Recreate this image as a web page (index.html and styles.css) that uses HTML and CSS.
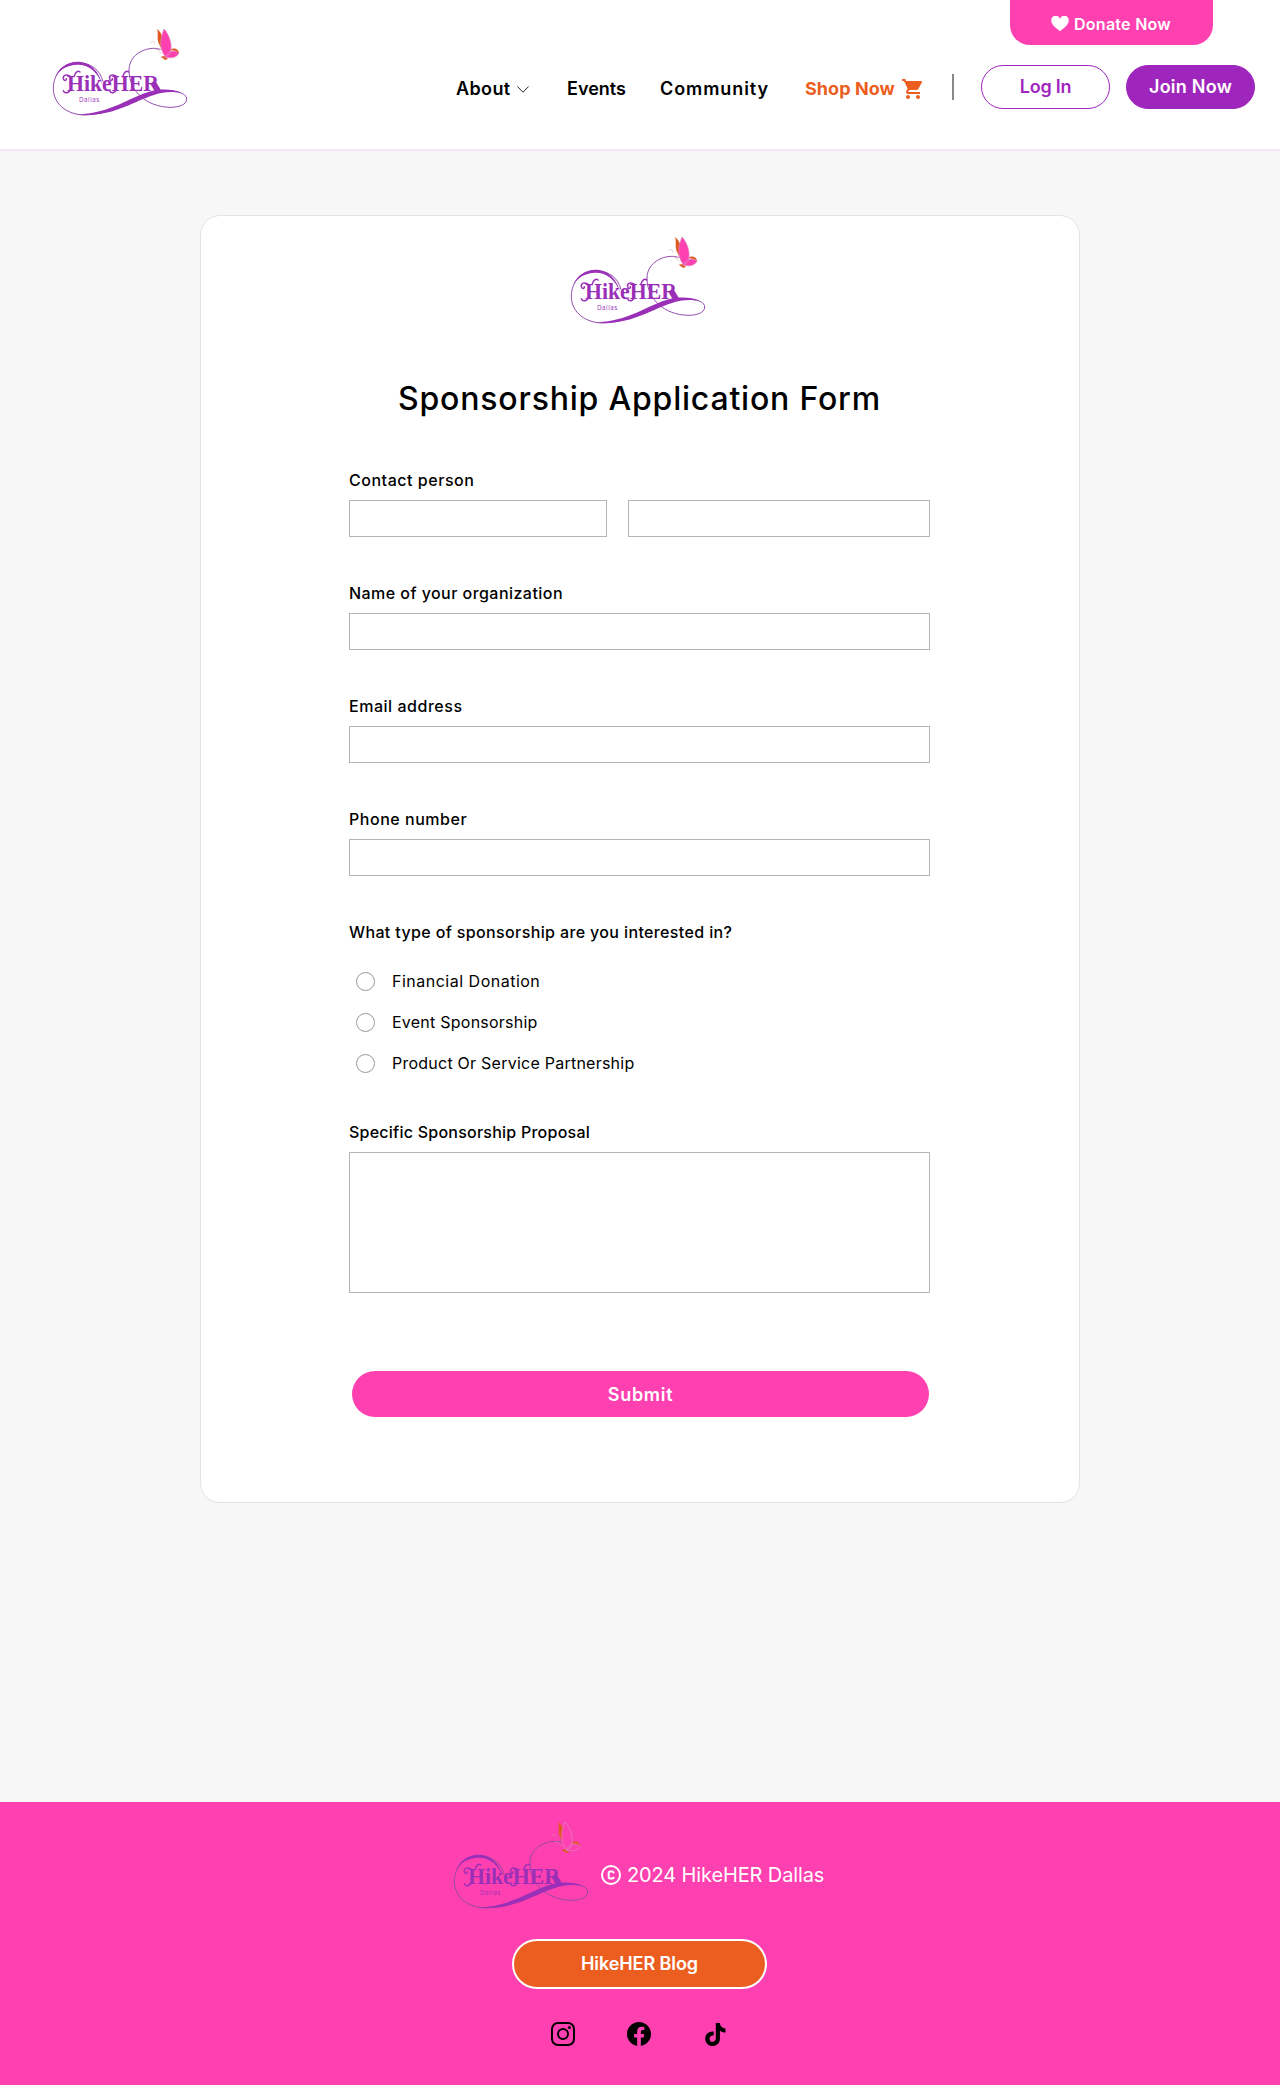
FILE: index.html
```html
<!DOCTYPE html>
<html lang="en">
<head>
<meta charset="utf-8">
<title>HikeHER Dallas – Sponsorship Application Form</title>
<link rel="stylesheet" href="styles.css">
</head>
<body>
<header class="header">
  <a class="donate" href="#"><svg class="heart" viewBox="0 0 18 16"><path d="M9 15.2C4 11.6.4 8.6.4 5.1A4.3 4.3 0 0 1 9 3 4.3 4.3 0 0 1 17.600 5.100C17.600 8.600 14 11.600 9 15.200Z"/></svg><span>Donate Now</span></a>
  <svg class="logo header-logo" viewBox="60 45 420 285">
    <g id="logo">
      <path fill="none" class="logo-thin" d="M219 215C210 178 180 158 145 158C100 158 70 192 70 235C70 285 115 315 165 315C240 315 300 270 360 250C400 238 470 240 470 267C470 285 445 292 420 292C350 290 297 245 297 180C297 140 335 114 375 115L392 118"/>
      <g class="logo-ink">
        <path d="M217 226C208 182 178 155 143 155C110 155 85 175 76 200C90 177 112 165 143 164C176 164 204 186 217 226Z"/>
        <path d="M140 313C240 312 300 260 365 243C395 236 430 237 455 248C420 244 395 247 370 256C310 274 245 325 140 313Z"/>
        <path d="M366 216L378 216L395 244L380 246Z"/>
        <text class="logo-name" x="111" y="243" textLength="276" lengthAdjust="spacingAndGlyphs">HikeHER</text>
        <text class="logo-city" x="147" y="276" textLength="61">Dallas</text>
      </g>
      <path class="logo-swash" fill="none" d="M122 200C110 190 98 196 100 206C102 214 110 212 109 206M122 236C120 250 104 252 100 242M132 200C136 186 144 180 150 186M261 200C247 190 237 196 239 206C241 214 248 212 247 206M259 236C257 250 243 252 239 242M278 200C282 186 290 180 296 186"/>
      <path fill="#e0591f" d="M403 134L386 100C380 82 386 68 381 57C394 66 400 82 399 104ZM392 140L404 138L414 146L406 150ZM420 120C432 111 445 116 448 130L434 122Z"/>
      <path class="logo-wing" d="M406 140C385 112 392 82 402 57C416 72 430 102 420 132ZM404 143C414 124 432 116 447 130C440 142 424 146 412 142Z"/>
      <path fill="none" stroke="#c99bb5" stroke-width="1.5" d="M394 130C385 125 384 115 372 116M362 100C364 92 374 92 374 103"/>
    </g>
  </svg>
  <nav class="nav">
    <a class="about" href="#">About<svg class="chevron" viewBox="0 0 12 7"><path d="M.4.5L6 6.200L11.600.5"/></svg></a>
    <a class="events" href="#">Events</a>
    <a class="community" href="#">Community</a>
    <a class="shop" href="#">Shop Now<svg class="cart" viewBox="1 2 20 20"><path d="M7 18c-1.100 0-1.990.9-1.990 2S5.900 22 7 22s2-.9 2-2-.9-2-2-2zM1 2v2h2l3.600 7.590-1.350 2.450c-.16.28-.25.61-.25.96 0 1.100.9 2 2 2h12v-2H7.420c-.14 0-.25-.11-.25-.25l.03-.12.9-1.630h7.450c.75 0 1.410-.41 1.750-1.030l3.580-6.490A1 1 0 0 0 20 4H5.210l-.94-2H1zm16 16c-1.100 0-1.990.9-1.990 2s.89 2 1.990 2 2-.9 2-2-.9-2-2-2z"/></svg></a>
  </nav>
  <span class="divider"></span>
  <a class="button login" href="#">Log In</a>
  <a class="button join" href="#">Join Now</a>
</header>

<main class="main">
  <form class="card">
    <svg class="logo card-logo" viewBox="60 45 420 285"><use href="#logo"/></svg>
    <h1 class="title">Sponsorship Application Form</h1>
    <div class="field">
      <label class="label wide" for="first">Contact person</label>
      <div class="names"><input class="input" id="first"><input class="input" aria-label="Last name"></div>
    </div>
    <div class="field"><label class="label" for="org">Name of your organization</label><input class="input" id="org"></div>
    <div class="field"><label class="label wide" for="email">Email address</label><input class="input" id="email"></div>
    <div class="field"><label class="label wide" for="phone">Phone number</label><input class="input" id="phone"></div>
    <div class="types">
      <div class="label question">What type of sponsorship are you interested in?</div>
      <label class="option wide"><input class="radio" type="radio" name="type"><span>Financial Donation</span></label>
      <label class="option"><input class="radio" type="radio" name="type"><span>Event Sponsorship</span></label>
      <label class="option"><input class="radio" type="radio" name="type"><span>Product Or Service Partnership</span></label>
    </div>
    <label class="label proposal" for="proposal">Specific Sponsorship Proposal</label>
    <textarea class="input textarea" id="proposal"></textarea>
    <button class="submit" type="button">Submit</button>
  </form>
</main>

<footer class="footer">
  <div class="brand">
    <svg class="logo footer-logo" viewBox="60 45 420 285"><use href="#logo"/></svg>
    <div class="copyright">
      <svg class="copy-icon" viewBox="0 0 20 20"><circle cx="10" cy="10" r="9"/><path d="M12.600 8.300V8A1.500 1.500 0 0 0 11.100 6.500H9.200A1.500 1.500 0 0 0 7.700 8v4a1.500 1.500 0 0 0 1.500 1.500h1.900A1.500 1.500 0 0 0 12.600 12v-.3"/></svg>
      <span>2024 HikeHER Dallas</span>
    </div>
  </div>
  <a class="blog" href="#">HikeHER Blog</a>
  <div class="social">
    <svg class="social-icon" viewBox="0 0 24 24"><g fill="none" stroke="#000" stroke-width="2"><rect x="1" y="1" width="22" height="22" rx="6"/><circle cx="12" cy="12" r="5"/></g><circle cx="18.400" cy="5.600" r="1.500"/></svg>
    <svg class="social-icon" viewBox="0 0 24 24"><path d="M24 12.073C24 5.446 18.627.073 12 .073S0 5.446 0 12.073c0 5.990 4.388 10.954 10.125 11.854v-8.385H7.078v-3.470h3.047V9.430c0-3.007 1.792-4.669 4.533-4.669 1.312 0 2.686.235 2.686.235v2.953H15.830c-1.491 0-1.956.925-1.956 1.874v2.250h3.328l-.532 3.470h-2.796v8.385C19.612 23.027 24 18.062 24 12.073z"/></svg>
    <svg class="tiktok" viewBox="0 0 21 23"><path d="M10.800 0h4c.2 3 2.300 5.200 5.700 5.400v4.200c-2.100 0-4-.6-5.600-1.800v7.900c0 4.300-3.200 7.300-7.400 7.300C3.400 23 .2 19.800.2 15.700c0-4.500 3.900-7.900 8.500-7.200v4.100c-2.200-.6-4.200.8-4.200 3.100a3.100 3.100 0 0 0 3.100 3.100c1.900 0 3.200-1.300 3.200-3.500z"/></svg>
  </div>
</footer>
</body>
</html>
```
FILE: styles.css
```css
* { box-sizing: border-box; }
body { margin: 0; background: #f7f7f7; color: #000; font-family: Inter, "Liberation Sans", sans-serif; font-size: 16px; line-height: 24px; }
a { color: inherit; text-decoration: none; }
svg { display: block; flex: none; }

.logo { --thin: #8b3fa8; width: 140px; height: 95px; }
.footer-logo { --thin: #8b4aa0; }
.logo-thin { stroke: var(--thin); stroke-width: 2.8px; }
.logo-ink { fill: #9a2fb8; }
.logo-name { font: 700 70px "Liberation Serif", serif; }
.logo-city { font: 400 19px "Open Sans", sans-serif; }
.logo-swash { stroke: #9a2fb8; stroke-width: 4.5px; stroke-linecap: round; }
.logo-wing { fill: #ff40b0; stroke: #d98abf; stroke-width: 2px; }

.header { position: relative; display: flex; align-items: flex-start; height: 151px; padding: 0 25px 0 50px; background: #fff; border-bottom: 2px solid #f7e3f9; }
.header-logo { margin-top: 25px; }
.donate { position: absolute; top: 0; left: 1010px; display: flex; align-items: center; gap: 5px; width: 203px; height: 45px; padding: 2px 0 0 41px; border-radius: 0 0 20px 20px; background: #ff40b0; color: #fff; font-weight: 600; letter-spacing: .27px; }
.heart { width: 18px; height: 16px; fill: #fff; }
.nav { display: grid; grid-template-columns: 111px 93px 145px 147px; margin: 77px 0 0 266px; font-size: 18px; font-weight: 600; }
.nav a { white-space: nowrap; }
.about { display: flex; align-items: center; gap: 6px; letter-spacing: .37px; }
.chevron { width: 12px; height: 7px; fill: none; stroke: #222; stroke-width: 1; }
.community { letter-spacing: .92px; }
.shop { display: flex; align-items: center; gap: 7px; color: #ec5e20; font-weight: 700; letter-spacing: .06px; }
.cart { width: 20px; height: 20px; fill: #ec5e20; }
.divider { width: 2px; height: 26px; margin-top: 74px; background: #888; }
.button { display: flex; align-items: center; justify-content: center; width: 129px; height: 44px; margin-top: 65px; border: 1px solid #9f26bd; border-radius: 22px; font-size: 18px; font-weight: 600; }
.login { margin-left: 27px; color: #9f26bd; letter-spacing: -.25px; }
.join { margin-left: 16px; background: #9f26bd; color: #fff; letter-spacing: .23px; }

.main { display: flex; justify-content: center; padding: 64px 0 299px; }
.card { width: 880px; height: 1288px; padding: 0 149px 0 148px; border: 1px solid #e2e2e2; border-radius: 20px; background: #fff; }
.card-logo { margin: 17px 0 0 219px; }
.title { margin: 47px 0 45px; font-size: 32px; font-weight: 500; line-height: 48px; letter-spacing: .8px; text-align: center; white-space: nowrap; }
.field { margin-bottom: 44px; }
.label { display: block; margin-bottom: 8px; font-weight: 500; letter-spacing: .45px; }
.wide { letter-spacing: .53px; }
.input { display: block; width: 100%; height: 37px; border: 1px solid #b5b5b5; border-radius: 0; background: #fff; }
.names { display: grid; grid-template-columns: 258px 302px; gap: 21px; }
.question { margin-bottom: 17px; letter-spacing: .37px; }
.option { display: flex; align-items: center; gap: 17px; height: 41px; padding-left: 7px; letter-spacing: .24px; }
.option.wide { letter-spacing: .5px; }
.option span { padding-bottom: 2px; }
.radio { appearance: none; width: 19px; height: 19px; margin: 0; border: 1px solid #999; border-radius: 50%; }
.proposal { margin-top: 36px; letter-spacing: .24px; }
.textarea { height: 141px; resize: none; }
.submit { display: block; width: 577px; height: 46px; margin: 78px 0 0 3px; border: 0; border-radius: 23px; background: #ff40b0; color: #fff; font: 600 18px Inter, sans-serif; letter-spacing: .72px; }

.footer { display: flex; flex-direction: column; align-items: flex-start; height: 283px; padding-top: 16px; background: #ff40b0; color: #fff; }
.brand { display: flex; align-items: center; gap: 10px; margin-left: 451px; }
.copyright { display: flex; align-items: center; gap: 6px; padding-top: 18px; font-size: 20px; letter-spacing: -.13px; }
.copy-icon { width: 20px; height: 20px; fill: none; stroke: #fff; stroke-width: 2; }
.blog { display: flex; align-items: center; justify-content: center; align-self: center; width: 255px; height: 50px; margin: 26px 1px 0 0; border: 2px solid #fff; border-radius: 25px; background: #ec5e20; font-size: 18px; font-weight: 600; letter-spacing: -.08px; }
.social { display: flex; align-items: center; margin: 33px 0 0 551px; }
.social-icon { width: 24px; height: 24px; margin-right: 52px; }
.tiktok { width: 21px; height: 23px; margin: 1px 0 0 2px; }
```
